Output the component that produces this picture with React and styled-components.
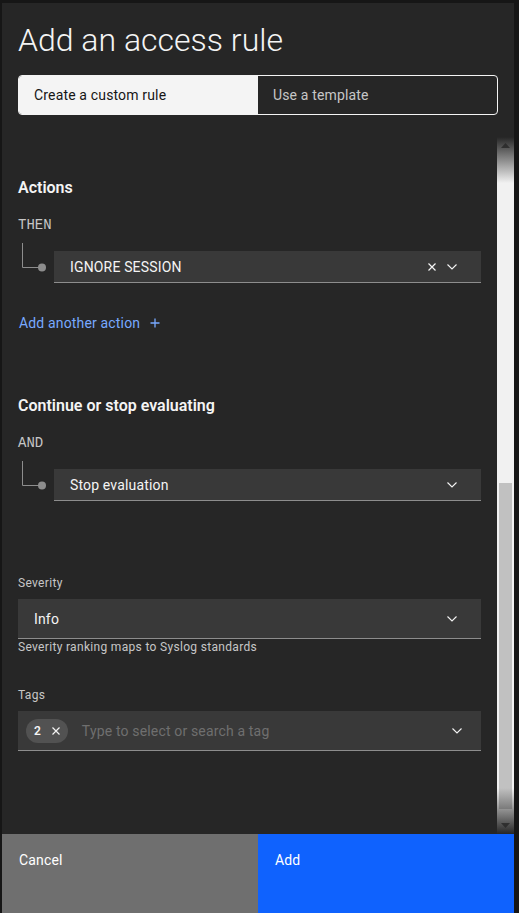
import React from "react";
import styled, { createGlobalStyle } from "styled-components";

const GlobalStyle = createGlobalStyle`
  html, body {
    margin: 0;
    padding: 0;
    background: #161616;
    height: 913px;
    overflow: hidden;
  }
  * {
    box-sizing: border-box;
  }
`;

const sans = `Roboto, "Noto Sans", "Liberation Sans", sans-serif`;
const mono = `"Liberation Mono", "DejaVu Sans Mono", monospace`;

const Modal = styled.div`
  margin: 3px 5px 0 2px;
  height: 910px;
  background: #262626;
  display: flex;
  flex-direction: column;
  overflow: hidden;
  font-family: ${sans};
  color: #f4f4f4;
`;

const Header = styled.div`
  padding: 17px 16px 22px 16px;
`;

const Title = styled.h2`
  margin: 0 0 15px 0;
  font-size: 32px;
  font-weight: 300;
  line-height: 40px;
  color: #f4f4f4;
`;

const Switcher = styled.div`
  display: flex;
  height: 40px;
  border: 1px solid #f4f4f4;
  border-radius: 4px;
  overflow: hidden;
`;

const SwitchTab = styled.button`
  flex: 1;
  border: none;
  margin: 0;
  padding: 0 0 0 15px;
  text-align: left;
  font-family: ${sans};
  font-size: 14px;
  letter-spacing: 0.16px;
  background: ${(p) => (p.$selected ? "#f4f4f4" : "transparent")};
  color: ${(p) => (p.$selected ? "#161616" : "#c6c6c6")};
`;

const ScrollArea = styled.div`
  position: relative;
  flex: 0 0 697px;
  display: flex;
  overflow: hidden;

  &::before,
  &::after {
    content: "";
    position: absolute;
    left: 0;
    right: 0;
    height: 46px;
    pointer-events: none;
  }
  &::before {
    top: 0;
    background: linear-gradient(to bottom, rgba(38, 38, 38, 1), rgba(38, 38, 38, 0));
  }
  &::after {
    bottom: 0;
    background: linear-gradient(to top, rgba(38, 38, 38, 1), rgba(38, 38, 38, 0));
  }
`;

const Content = styled.div`
  flex: 1;
  padding: 39px 16px 0 16px;
`;

const SectionTitle = styled.h3`
  margin: ${(p) => p.$top || "0"} 0 0 0;
  font-size: 16px;
  font-weight: 600;
  line-height: 24px;
  color: #f4f4f4;
`;

const Operator = styled.div`
  margin-top: 16px;
  font-family: ${mono};
  font-size: 14px;
  line-height: 18px;
  color: #c6c6c6;
`;

const ConditionRow = styled.div`
  display: flex;
  align-items: flex-start;
  margin-top: 17px;
`;

const Connector = styled.svg`
  flex: 0 0 36px;
  height: 32px;
  overflow: visible;
`;

const Field = styled.div`
  flex: 1;
  display: flex;
  align-items: center;
  height: ${(p) => p.$height || 40}px;
  background: #393939;
  border-bottom: 1px solid #8d8d8d;
  padding: 0 ${(p) => p.$padRight || 18}px 0 ${(p) => p.$padLeft || 16}px;
  gap: 10px;
`;

const FieldValue = styled.span`
  flex: 1;
  font-size: 14px;
  letter-spacing: 0.16px;
  color: ${(p) => (p.$placeholder ? "#6f6f6f" : "#f4f4f4")};
  white-space: nowrap;
`;

const IconBox = styled.span`
  display: inline-flex;
  align-items: center;
  justify-content: center;
  width: 10px;
  height: 16px;
`;

const AddLink = styled.a`
  display: inline-flex;
  align-items: center;
  gap: 10px;
  margin-top: 31px;
  margin-left: 1px;
  font-size: 14px;
  line-height: 18px;
  letter-spacing: 0.16px;
  color: #78a9ff;
  text-decoration: none;
`;

const Label = styled.div`
  margin-top: ${(p) => p.$top || "0"};
  margin-bottom: 8px;
  font-size: 12px;
  line-height: 16px;
  letter-spacing: 0.32px;
  color: #c6c6c6;
`;

const Helper = styled.div`
  margin-top: 0;
  font-size: 12px;
  line-height: 16px;
  letter-spacing: 0.32px;
  color: #c6c6c6;
`;

const Tag = styled.span`
  display: inline-flex;
  align-items: center;
  gap: 11px;
  height: 24px;
  padding: 0 8px;
  margin-right: 4px;
  border-radius: 12px;
  background: #525252;
  font-size: 12px;
  font-weight: 600;
  color: #f4f4f4;
`;

const Scrollbar = styled.div`
  flex: 0 0 17px;
  display: flex;
  flex-direction: column;
  background: #f1f1f1;
`;

const Arrow = styled.div`
  height: 17px;
  display: flex;
  align-items: center;
  justify-content: center;
`;

const Track = styled.div`
  flex: 1;
  padding: 0 2px;
`;

const Thumb = styled.div`
  margin-top: ${(p) => p.$offset}px;
  height: ${(p) => p.$size}px;
  background: #c1c1c1;
`;

const Footer = styled.div`
  display: flex;
  flex: 1;
`;

const FooterButton = styled.button`
  flex: 1;
  border: none;
  margin: 0;
  padding: 17px 16px 0 17px;
  text-align: left;
  align-self: stretch;
  display: flex;
  align-items: flex-start;
  font-family: ${sans};
  font-size: 14px;
  line-height: 18px;
  letter-spacing: 0.16px;
  color: #ffffff;
  background: ${(p) => (p.$primary ? "#0f62fe" : "#6f6f6f")};
`;

const Close = ({ size = 8 }) => (
  <svg width={size} height={size} viewBox="0 0 8 8">
    <path d="M0.5 0.5 L7.5 7.5 M7.5 0.5 L0.5 7.5" stroke="#f4f4f4" strokeWidth="1.2" fill="none" />
  </svg>
);

const Chevron = () => (
  <svg width="10" height="6" viewBox="0 0 10 6">
    <path d="M0.5 0.5 L5 5 L9.5 0.5" stroke="#f4f4f4" strokeWidth="1.1" fill="none" />
  </svg>
);

const Plus = () => (
  <svg width="10" height="10" viewBox="0 0 10 10">
    <path d="M5 0.5 V9.5 M0.5 5 H9.5" stroke="#78a9ff" strokeWidth="1.3" fill="none" />
  </svg>
);

const Branch = () => (
  <Connector viewBox="0 0 36 32">
    <path d="M4.5 -8 V16.5 H22" stroke="#8d8d8d" strokeWidth="1" fill="none" />
    <circle cx="24" cy="16.5" r="4" fill="#8d8d8d" />
  </Connector>
);

const Triangle = ({ down }) => (
  <svg width="9" height="5" viewBox="0 0 9 5">
    <path d={down ? "M0 0 H9 L4.5 5 Z" : "M0 5 H9 L4.5 0 Z"} fill="#505050" />
  </svg>
);

export default function App() {
  return (
    <>
      <GlobalStyle />
      <Modal>
        <Header>
          <Title>Add an access rule</Title>
          <Switcher>
            <SwitchTab $selected>Create a custom rule</SwitchTab>
            <SwitchTab>Use a template</SwitchTab>
          </Switcher>
        </Header>

        <ScrollArea>
          <Content>
            <SectionTitle>Actions</SectionTitle>
            <Operator>THEN</Operator>
            <ConditionRow>
              <Branch />
              <Field $height={32} $padRight={24}>
                <FieldValue>IGNORE SESSION</FieldValue>
                <IconBox>
                  <Close />
                </IconBox>
                <IconBox>
                  <Chevron />
                </IconBox>
              </Field>
            </ConditionRow>
            <AddLink href="#">
              Add another action <Plus />
            </AddLink>

            <SectionTitle $top="62px">Continue or stop evaluating</SectionTitle>
            <Operator>AND</Operator>
            <ConditionRow>
              <Branch />
              <Field $height={32} $padRight={24}>
                <FieldValue>Stop evaluation</FieldValue>
                <IconBox>
                  <Chevron />
                </IconBox>
              </Field>
            </ConditionRow>

            <Label $top="74px">Severity</Label>
            <Field $padRight={24}>
              <FieldValue>Info</FieldValue>
              <IconBox>
                <Chevron />
              </IconBox>
            </Field>
            <Helper>Severity ranking maps to Syslog standards</Helper>

            <Label $top="32px">Tags</Label>
            <Field $padLeft={8} $padRight={19}>
              <Tag>
                2 <Close />
              </Tag>
              <FieldValue $placeholder>Type to select or search a tag</FieldValue>
              <IconBox>
                <Chevron />
              </IconBox>
            </Field>
          </Content>
          <Scrollbar>
            <Arrow>
              <Triangle />
            </Arrow>
            <Track>
              <Thumb $offset={329} $size={326} />
            </Track>
            <Arrow>
              <Triangle down />
            </Arrow>
          </Scrollbar>
        </ScrollArea>

        <Footer>
          <FooterButton>Cancel</FooterButton>
          <FooterButton $primary>Add</FooterButton>
        </Footer>
      </Modal>
    </>
  );
}
